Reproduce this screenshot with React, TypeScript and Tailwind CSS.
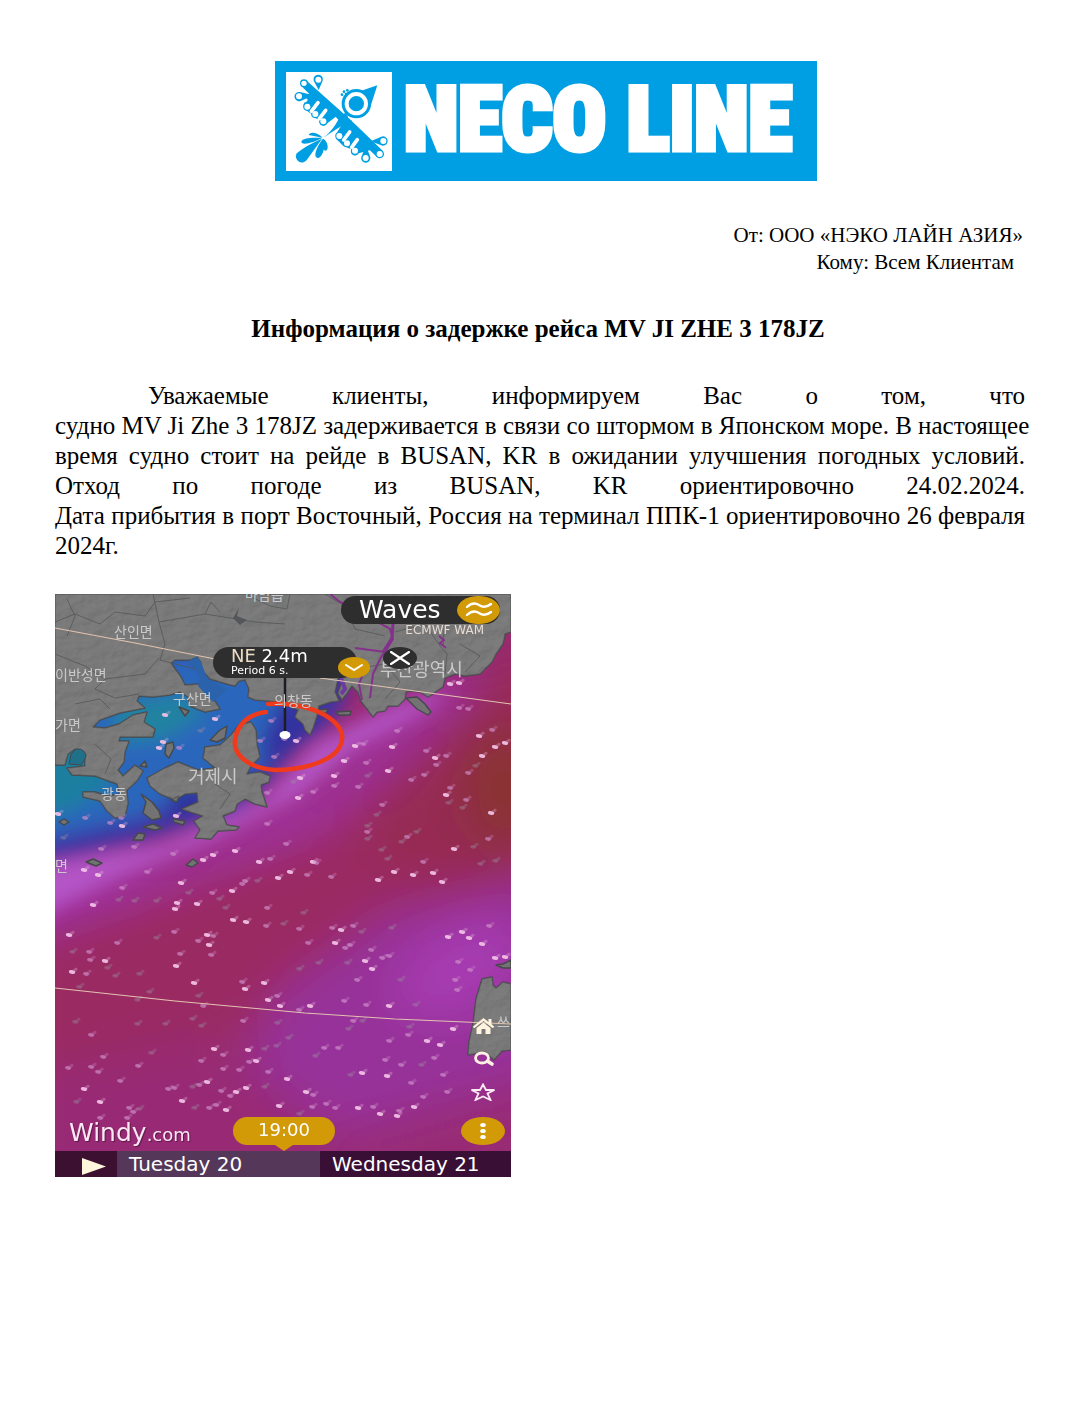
import React from "react";

type Pt = [number, number, number];

// x, y, brightness (1 = faint, 2 = medium, 3 = bright)
const PARTICLES: Pt[] = [
  [126, 289, 3], [187, 290, 2], [202, 287, 1], [177, 297, 3], [67, 294, 2], [157, 299, 2], [133, 299, 1], [164, 305, 1],
  [38, 311, 3], [63, 306, 1], [79, 307, 1], [101, 307, 1], [122, 309, 3], [120, 315, 3], [142, 310, 3], [170, 314, 1],
  [212, 314, 2], [248, 319, 1], [178, 326, 3], [191, 328, 3], [211, 332, 2], [228, 330, 1], [244, 335, 2], [277, 334, 2],
  [286, 336, 3], [298, 332, 2], [306, 338, 1], [14, 341, 3], [119, 338, 2], [152, 341, 3], [158, 342, 2], [101, 344, 1],
  [62, 349, 2], [143, 347, 2], [154, 351, 3], [253, 349, 2], [280, 349, 3], [295, 351, 2], [290, 354, 2], [316, 356, 2],
  [17, 358, 1], [34, 358, 2], [125, 360, 2], [156, 361, 2], [35, 366, 2], [50, 367, 3], [52, 374, 1], [121, 372, 3],
  [17, 378, 3], [31, 380, 2], [60, 382, 1], [84, 380, 1], [310, 367, 3], [292, 369, 1], [317, 375, 3], [327, 364, 2],
  [334, 362, 2], [263, 369, 1], [244, 375, 1], [336, 334, 1], [393, 343, 3], [407, 338, 3], [414, 344, 3], [427, 350, 3],
  [434, 332, 2], [440, 364, 3], [450, 363, 3], [403, 368, 2], [415, 376, 2], [400, 386, 2], [402, 396, 2], [139, 389, 3],
  [187, 388, 2], [190, 395, 3], [209, 389, 3], [302, 386, 2], [345, 386, 1], [213, 406, 3], [222, 402, 2], [225, 412, 3],
  [255, 412, 3], [289, 407, 2], [311, 411, 2], [334, 412, 3], [360, 411, 1], [244, 416, 2], [148, 412, 2], [143, 402, 1],
  [82, 406, 1], [24, 393, 1], [94, 398, 1], [298, 427, 2], [307, 427, 1], [293, 435, 1], [188, 427, 2], [137, 425, 1],
  [146, 432, 1], [82, 430, 1], [110, 430, 1], [20, 428, 1], [36, 441, 2], [222, 429, 1], [354, 433, 1], [398, 435, 3],
  [353, 441, 2], [334, 447, 2], [372, 447, 3], [385, 451, 3], [283, 454, 2], [269, 454, 2], [233, 444, 1], [221, 452, 1],
  [209, 455, 1], [159, 455, 3], [168, 461, 2], [193, 456, 3], [201, 467, 3], [194, 468, 2], [146, 467, 2], [96, 459, 1],
  [48, 463, 2], [260, 462, 1], [330, 466, 2], [346, 471, 2], [366, 471, 1], [379, 464, 2], [83, 472, 2], [13, 474, 2],
  [36, 473, 2], [43, 478, 2], [168, 475, 2], [184, 476, 2], [213, 478, 2], [307, 479, 3], [332, 482, 3], [388, 481, 2],
  [65, 487, 2], [232, 485, 3], [152, 488, 3], [144, 491, 2], [356, 489, 2], [295, 481, 1], [29, 495, 3], [113, 495, 2],
  [119, 494, 2], [137, 493, 1], [191, 494, 3], [209, 493, 1], [181, 498, 3], [175, 502, 2], [166, 497, 2], [251, 498, 3],
  [258, 501, 2], [392, 498, 2], [368, 503, 2], [21, 508, 1], [45, 508, 3], [127, 507, 3], [161, 511, 2], [154, 514, 2],
  [139, 514, 1], [171, 516, 3], [224, 512, 3], [257, 513, 2], [271, 510, 2], [280, 514, 2], [303, 514, 3], [318, 513, 2],
  [359, 513, 3], [325, 520, 3], [342, 522, 3], [344, 517, 2], [74, 514, 2], [78, 518, 2], [72, 524, 2], [45, 524, 2],
  [244, 520, 1], [84, 515, 1], [300, 152, 3], [308, 150, 2], [337, 153, 3], [371, 157, 2], [380, 164, 3], [391, 162, 2],
  [381, 171, 2], [424, 142, 3], [440, 153, 3], [450, 149, 3], [427, 162, 3], [420, 172, 1], [413, 179, 2], [311, 169, 2],
  [289, 167, 3], [279, 182, 3], [245, 184, 3], [279, 192, 2], [303, 193, 2], [312, 182, 1], [333, 177, 3], [356, 186, 2],
  [369, 181, 2], [258, 198, 2], [243, 204, 3], [238, 188, 1], [395, 194, 2], [391, 201, 3], [411, 206, 2], [393, 209, 1],
  [407, 214, 1], [327, 211, 2], [321, 221, 1], [436, 219, 3], [433, 245, 2], [399, 255, 3], [418, 253, 1], [312, 232, 1],
  [312, 238, 2], [312, 245, 1], [352, 243, 2], [361, 238, 1], [346, 248, 1], [326, 256, 1], [368, 268, 2], [332, 265, 1],
  [231, 250, 2], [258, 268, 3], [261, 269, 2], [235, 278, 3], [252, 281, 2], [276, 283, 2], [323, 286, 3], [339, 278, 3],
  [358, 281, 3], [378, 279, 3], [387, 288, 3], [425, 270, 1], [440, 267, 1], [404, 114, 2], [413, 115, 2], [437, 136, 2],
  [342, 137, 2], [395, 90, 3], [404, 89, 3], [212, 199, 2], [212, 230, 2], [229, 145, 2], [241, 147, 3], [216, 127, 2],
  [205, 147, 2], [219, 163, 2], [180, 257, 3], [158, 261, 3], [148, 266, 3], [118, 260, 2], [204, 268, 3], [215, 265, 2],
  [223, 284, 3], [190, 287, 2], [92, 278, 2], [79, 253, 2], [29, 276, 3], [43, 281, 3], [46, 255, 2], [55, 229, 2],
  [67, 232, 3], [66, 224, 2], [30, 224, 2], [3, 220, 3], [8, 244, 1], [110, 121, 3], [160, 125, 3], [145, 137, 1],
  [108, 148, 3], [104, 154, 3], [124, 154, 2], [121, 222, 3],
];

const FILL = ["", "#9b8aa0", "#cf8fcb", "#f0bfe4"];

const LAND =
  "M0 0H456V38L450 40L448 50L441 60L437 68L425 80L410 82L400 80L390 84L388 93L382 97L373 103L365 98L356 97L351 98L350 105L343 112L333 112L330 117L322 118L318 123L312 115L306 107L303 98L297 92L292 99L287 106L283 99L287 88L284 80L280 98L284 107L276 108L264 112L262 122L258 134L255 141L250 136L248 130L240 123L243 116L234 112L222 108L213 107L200 106L193 103L194 95L190 86L184 87L180 92L172 90L165 88L155 85L147 76L146 68L142 63L135 66L120 66L116 69L126 83L130 91L143 90L150 98L158 104L165 115L150 118L142 115L135 112L133 103L125 98L115 101L98 103L84 102L82 107L90 114L65 119L45 126L38 133L50 134L64 130L78 121L92 118L89 128L100 135L98 143L65 143L64 147L74 147L70 158L69 168L63 176L68 182L80 171L88 177L82 187L72 196L73 210L70 222L60 224L52 217L45 207L28 203L28 198L40 198L52 202L65 200L62 190L40 182L17 181L12 174L30 172L30 162L20 155L13 160L10 171H0Z";
const GEOJE =
  "M92 184L110 174L123 168L143 176L160 174L148 164L150 153L165 151L176 141L184 131L196 128L201 136L202 150L205 163L196 172L192 180L205 178L215 182L214 188L206 191L207 198L212 213L200 210L190 205L182 210L180 217L168 222L172 231L184 233L181 236L163 237L156 245L140 244L145 236L139 227L148 222L135 218L127 215L143 208L142 199L130 200L120 206L105 200L95 192Z";
const TSUSHIMA =
  "M427 385L437 383L438 391L441 394L448 388L456 390V456L447 457L439 466L430 458L413 461L414 448L418 430L421 405Z";
const ISLES = [
  "M86 200L97 208L104 217L106 224L97 226L88 219L91 208Z",
  "M111 150L118 148L119 154L114 164L110 160Z",
  "M155 146L165 136L172 132L170 144L162 148Z",
  "M124 113L134 117L130 122Z",
  "M116 206L124 202L122 208Z",
  "M118 225L130 227L128 231L119 228Z",
  "M88 233L98 230L107 234L100 236Z",
  "M78 246L83 239L90 240L88 246Z",
  "M31 268L38 265L47 269L41 272Z",
  "M131 271L138 265L143 269L137 273Z",
  "M4 228L9 225L14 228L9 231Z",
  "M85 172L90 167L92 173Z",
  "M351 104L362 103L370 110L376 118L373 121L362 115Z",
  "M262 116L273 115L271 119L262 119Z",
  "M281 118L296 117L295 121L284 121Z",
  "M441 371L448 370L456 366V374L448 374Z",
];
const ROADS =
  "M0 28L20 20L45 30L60 18L90 22L100 8L135 4M98 0L104 28L110 50L105 66L140 75M190 0L215 12L232 15L235 0M104 28L150 20L200 28L230 30M0 60L30 72L50 85L90 80L104 64M50 85L40 95L60 104L84 100M12 5L20 22L12 42M150 20L156 8L165 18M270 0L290 12L300 35L330 42M340 38L370 30L385 52L392 60L390 80M385 5L390 22L388 52M300 75L330 70L345 88L330 105M405 50L425 62L410 78M20 110L45 105L55 115M40 150L56 165L50 180M160 190L175 200L165 215";
const INLET = "M134 70L145 83L143 92L158 108L172 96L152 84L146 68L142 63L135 66Z";

function SeaMap() {
  return (
    <svg viewBox="0 0 456 583" preserveAspectRatio="none" className="col-start-1 row-start-1 block h-full w-full" aria-hidden="true">
      <defs>
        <filter id="soft" x="-50%" y="-50%" width="200%" height="200%"><feGaussianBlur stdDeviation="22" /></filter>
        <filter id="soft2" x="-50%" y="-50%" width="200%" height="200%"><feGaussianBlur stdDeviation="9" /></filter>
        <filter id="speck"><feGaussianBlur stdDeviation="0.7" /></filter>
        <filter id="relief" x="0" y="0" width="100%" height="100%">
          <feTurbulence type="fractalNoise" baseFrequency="0.07 0.1" numOctaves="3" seed="4" result="n" />
          <feDiffuseLighting in="n" surfaceScale="2" lightingColor="#949494" result="l"><feDistantLight azimuth="225" elevation="55" /></feDiffuseLighting>
          <feComposite in="l" in2="SourceAlpha" operator="in" />
        </filter>
      </defs>
      <rect width="456" height="583" fill="#972a70" />
      <g filter="url(#soft)">
        <path d="M-40 330L200 260L330 200L500 150V330L250 420L-40 540Z" fill="#9a2a62" />
        <path d="M220 400L330 320L500 280V480L300 540L170 520Z" fill="#97309a" />
        <ellipse cx="405" cy="375" rx="70" ry="42" fill="#a63bb0" transform="rotate(-30 405 375)" />
        <path d="M-40 480L160 440L300 560L500 500V620H-40Z" fill="#982a74" />
        <path d="M-40 350V280L120 260L260 190L330 120L400 80L430 90L360 150L260 240L100 300Z" fill="#a030a2" />
        <path d="M320 210L380 150L450 70L510 50V260L400 290L320 270Z" fill="#962a52" />
        <ellipse cx="450" cy="195" rx="42" ry="60" fill="#8a3030" />
      </g>
      <g filter="url(#soft2)">
        <path d="M-20 325V272L110 250L210 205L260 150L340 112L400 95L370 118L300 155L240 205L150 250L60 285Z" fill="#b455c6" />
        <path d="M-20 -20H300L290 108L272 132L240 157L212 190L180 218L90 246L-20 270Z" fill="#3c35a4" />
        <path d="M-20 60H190L235 112L215 170L140 195L90 222L-20 248Z" fill="#2a66bc" />
        <path d="M-20 150L30 140L60 190L20 215L-20 225Z" fill="#1f7fa0" />
        <path d="M60 110L130 100L150 120L110 145L60 150Z" fill="#2283a0" />
        <path d="M225 108L255 112L262 138L235 152L205 170L208 142Z" fill="#3030a0" />
        <path d="M120 195L145 193L140 212L115 218Z" fill="#252c94" />
      </g>
      <g fill="#727372" stroke="#46484a" strokeWidth="1.4" strokeLinejoin="round">
        <path d={LAND} /><path d={GEOJE} /><path d={TSUSHIMA} />
        {ISLES.map((d) => <path key={d} d={d} />)}
      </g>
      <g filter="url(#relief)" opacity="0.35">
        <path d={LAND} /><path d={GEOJE} /><path d={TSUSHIMA} />
      </g>
      <path d={INLET} fill="#2a62ac" />
      <path d={ROADS} fill="none" stroke="#525456" strokeWidth="1" opacity="0.75" strokeLinejoin="round" />
      <path d="M178 24L184 14L182 22L192 26L185 31Z" fill="#54565a" />
      <path d="M21 155A8 7 0 0 1 30 165L26 171L14 170L16 160Z" fill="#20708a" stroke="#46484a" />
      <g fill="none" stroke="#84308c" strokeWidth="3">
        <path d="M275 0L285 8L308 20L335 35L338 45L330 58L300 54M338 45L325 65L318 80L315 104M312 70L304 90L307 106" strokeWidth="2" />
        <path d="M338 30L337 44L328 58" />
        <path d="M384 42L389 46L385 49L391 54" strokeWidth="2" />
        <path d="M286 84L290 95L286 100" strokeWidth="4" stroke="#6c3aa0" />
      </g>
      <g filter="url(#speck)">
        {PARTICLES.map(([x, y, b], i) => (
          <g key={i} fill={FILL[b]}>
            <path d={`M${x - 2.5} ${y}L${x + 4} ${y - 4.5}L${x + 6} ${y - 3}L${x + 2.5} ${y + 1}Z`} opacity="0.3" />
            <ellipse cx={x} cy={y} rx={b === 3 ? 3.2 : 3} ry={b === 3 ? 1.9 : 1.7} transform={`rotate(15 ${x} ${y})`} opacity={b === 1 ? 0.3 : b === 2 ? 0.6 : 0.95} />
          </g>
        ))}
      </g>
      <g fill="none" stroke="#e3c3b0" strokeWidth="1.2">
        <path d="M0 34L80 49L160 65" /><path d="M265 84L360 97L456 110" /><path d="M0 394L120 407L250 419L340 425L456 430" />
      </g>
      <path d="M230 84V138" stroke="#1c1c24" strokeWidth="2.5" />
      <path d="M213 110C260 108 290 128 287 146C284 168 245 176 220 176C192 174 178 160 180 146C182 130 194 120 211 118" fill="none" stroke="#f03a1c" strokeWidth="4.5" strokeLinecap="round" />
      <ellipse cx="230" cy="141" rx="5.5" ry="4" fill="#fff" />
    </svg>
  );
}

function Bird() {
  return (
    <svg viewBox="0 0 318 297" className="h-[99px] w-[106px] shrink-0 bg-white" aria-hidden="true">
      <g fill="#009fe3">
        <path d="M46 42L62 26L174 126L184 134L290 236L272 254L180 166L150 136L120 116Z" />
        <path d="M112 198C134 180 152 156 164 128L198 146C166 160 136 180 112 198Z" />
        <path d="M226 56L274 40L252 108Z" />
        <circle cx="211" cy="95" r="44" />
        <path d="M178 122L186 132L182 140L164 132Z" />
        <circle cx="168" cy="68" r="4" /><circle cx="174" cy="59" r="4" /><circle cx="184" cy="55" r="4" /><circle cx="180" cy="66" r="4" />
        <path d="M97 8A14 14 0 0 1 110 26L98 54L84 28A14 14 0 0 1 97 8Z" />
        <path d="M42 60L82 70L46 86A14 14 0 1 1 42 60Z" />
        <path d="M254 208L286 194A14 14 0 1 1 290 221Z" />
        <path d="M240 222L252 252A14 14 0 1 1 226 254Z" />
        <circle cx="54" cy="34" r="12" /><circle cx="281" cy="246" r="13" />
        <path d="M52 99L76 52L160 126L124 154A12 12 0 0 1 101 144L78 134L76 126L54 110Z" />
        <path d="M149 188L172 150L262 232L218 244A12 12 0 0 1 196 232L172 222L150 200Z" />
        <circle cx="64" cy="104" r="12" /><circle cx="88" cy="126" r="12" /><circle cx="112" cy="148" r="12" />
        <circle cx="160" cy="192" r="12" /><circle cx="183" cy="214" r="12" /><circle cx="207" cy="236" r="12" />
        <path d="M110 197L68 189C72 178 94 180 110 197Z" />
        <path d="M108 198C86 196 46 196 46 210C48 222 88 210 108 198Z" />
        <path d="M108 200L64 262A16 16 0 1 1 32 244C50 228 80 212 108 200Z" />
        <path d="M110 201C122 222 108 258 96 258C78 256 94 222 110 201Z" />
        <path d="M111 200C126 206 130 234 118 236C108 234 108 214 111 200Z" />
      </g>
      <g stroke="#fff" strokeWidth="11" strokeLinecap="round">
        <path d="M76 118L96 92" /><path d="M100 140L119 115" /><path d="M58 88L62 84" strokeWidth="6" />
        <path d="M173 204L191 180" /><path d="M197 226L214 203" />
      </g>
      <g fill="#fff">
        <circle cx="54" cy="34" r="8" /><circle cx="97" cy="23" r="9" /><circle cx="39" cy="73" r="9" />
        <circle cx="292" cy="207" r="9" /><circle cx="239" cy="258" r="9" /><circle cx="281" cy="246" r="9" />
        <circle cx="64" cy="104" r="9" /><circle cx="88" cy="126" r="9" /><circle cx="112" cy="148" r="9" />
        <circle cx="160" cy="192" r="9" /><circle cx="183" cy="214" r="9" /><circle cx="207" cy="236" r="9" />
      </g>
      <circle cx="211" cy="95" r="29" fill="none" stroke="#fff" strokeWidth="12" />
    </svg>
  );
}

const PLACES = [
  { name: "마암읍", at: "top-[-8px] left-[190px]" },
  { name: "산인면", at: "top-[29px] left-[59px]" },
  { name: "이반성면", at: "top-[72px] left-0" },
  { name: "구산면", at: "top-[96px] left-[118px]" },
  { name: "가면", at: "top-[122px] left-0" },
  { name: "의창동", at: "top-[98px] left-[219px]" },
  { name: "광동", at: "top-[191px] left-[46px]" },
  { name: "면", at: "top-[263px] left-0" },
  { name: "쓰", at: "top-[419px] left-[442px]" },
  { name: "거제시", at: "top-[173px] left-[133px] text-[18px]" },
  { name: "부산광역시", at: "top-[66px] left-[325px] text-[18px]" },
];

const gold = "flex items-center justify-center rounded-[50%] bg-[#d39a08]";

export default function App() {
  return (
    <main className="min-h-screen bg-white pt-[61px] pr-[63px] pb-16 pl-[55px] font-['Liberation_Serif','Times_New_Roman',serif] text-black">
      <header>
        <div className="ml-[220px] flex h-[120px] w-[542px] items-center gap-3 bg-[#009fe3] px-[11px]">
          <Bird />
          <span className="pb-1 whitespace-nowrap font-['Roboto_Condensed','Liberation_Sans_Narrow',sans-serif] text-[89px] leading-none font-black text-white [-webkit-text-stroke:5px_white]">NECO LINE</span>
        </div>
        <div className="mt-[41px] text-right text-[21px] leading-[27px]">
          <p className="pr-0.5">От: ООО «НЭКО ЛАЙН АЗИЯ»</p>
          <p className="pr-[11px]">Кому: Всем Клиентам</p>
        </div>
      </header>
      <h1 className="mt-[38px] pr-1 text-center text-[25px] leading-[30px] font-bold">Информация о задержке рейса MV JI ZHE 3 178JZ</h1>
      <div className="mt-[37px] text-justify text-[25px] leading-[30px]">
        <p className="indent-[93px] [text-align-last:justify]">Уважаемые клиенты, информируем Вас о том, что</p>
        <p className="whitespace-nowrap [text-align-last:justify]">судно MV Ji Zhe 3 178JZ задерживается в связи со штормом в Японском море. В настоящее</p>
        <p className="[text-align-last:justify]">
          время судно стоит на рейде в BUSAN, KR в ожидании улучшения погодных условий. Отход по погоде из BUSAN, KR ориентировочно 24.02.2024.
        </p>
        <p>Дата прибытия в порт Восточный, Россия на терминал ППК-1 ориентировочно 26 февраля 2024г.</p>
      </div>

      <figure className="relative mt-[33px] grid h-[583px] w-[456px] overflow-hidden font-['DejaVu_Sans',sans-serif] text-white">
        <SeaMap />
        {PLACES.map((p) => (
          <span key={p.name + p.at} className={"absolute font-['Noto_Sans_CJK_KR',sans-serif] text-[14px] leading-4 whitespace-nowrap text-[#c9c9c9] " + p.at}>{p.name}</span>
        ))}

        <div className="absolute top-[53px] left-[158px] flex items-start">
          <div className="h-[31px] w-[144px] rounded-full bg-[#2e2e2e] pl-[18px] whitespace-nowrap">
            <p className="text-[18px] leading-[18px]"><span className="text-[#e8dcc4]">NE</span> 2.4m</p>
            <p className="text-[11px] leading-[12px]">Period 6 s.</p>
          </div>
          <button aria-label="Expand" className={gold + " mt-[10px] -ml-[19px] h-[21px] w-8"}>
            <svg viewBox="0 0 18 8" className="h-2 w-[18px]" fill="none" stroke="#fff" strokeWidth="2" strokeLinecap="round"><path d="M1 1L9 6L17 1" /></svg>
          </button>
          <button aria-label="Close" className="ml-[13px] flex h-[22px] w-[34px] items-center justify-center rounded-[50%] bg-[#2e2e2e]">
            <svg viewBox="0 0 20 14" className="h-3.5 w-5" stroke="#fff" strokeWidth="2.2" strokeLinecap="round"><path d="M1 1L19 13M19 1L1 13" /></svg>
          </button>
        </div>

        <div className="relative col-start-1 row-start-1 flex flex-col justify-between">
          <div className="flex flex-col items-end pt-0.5 pr-[11px]">
            <div className="flex h-7 w-[159px] items-center justify-between rounded-full bg-[#2e2e2e] pl-[18px] text-[25px] leading-7">
              Waves
              <button aria-label="Choose layer" className={gold + " h-7 w-[43px]"}>
                <svg viewBox="0 0 28 16" className="h-4 w-7" fill="none" stroke="#fff" strokeWidth="2.4" strokeLinecap="round"><path d="M2 5C7 0 11 1 14 3S21 6 26 2M2 13C7 8 11 9 14 11S21 14 26 10" /></svg>
              </button>
            </div>
            <span className="pr-4 text-[12px] leading-3 whitespace-nowrap text-[#e8dcd4]">ECMWF WAM</span>
          </div>

          <div>
            <div className="flex flex-col items-end gap-4 pr-[15px]">
              <button aria-label="Home">
                <svg viewBox="0 0 24 18" className="h-[18px] w-[25px]" fill="#fff3df"><path d="M12 1L1 10L3 11L12 4L21 11L23 10L20 7V2H17V5Z" /><path d="M12 5.500L5 11V17H10V12H14V17H19V11Z" /></svg>
              </button>
              <button aria-label="Search">
                <svg viewBox="0 0 24 16" className="h-4 w-6" fill="none" stroke="#fff0e4"><ellipse cx="10" cy="7" rx="6.500" ry="5" strokeWidth="2.800" /><path d="M16 10.500L20 13" strokeWidth="3.600" strokeLinecap="round" /></svg>
              </button>
              <button aria-label="Favourite">
                <svg viewBox="0 0 26 18" className="h-[18px] w-[26px]" fill="none" stroke="#fdeaf3" strokeWidth="1.800"><path d="M13 1.500L16 7H24.500L17.500 10.500L20.500 17L13 13.500L5.500 17L8.500 10.500L1.500 7H10Z" /></svg>
              </button>
            </div>
            <div className="mt-4 mb-1.5 flex h-7 items-center pr-1.5 pl-[14px]">
              <p className="w-[164px] pt-1.5 text-[25px] leading-7 whitespace-nowrap text-[#fde8f4] [text-shadow:1px_1px_1px_#5a1848]">Windy<span className="text-[18px]">.com</span></p>
              <div className="relative h-7 w-[102px] rounded-full bg-[#d39a08] text-center text-[18px] leading-[26px]">
                19:00
                <svg viewBox="0 0 24 8" className="absolute top-full left-1/2 -mt-0.5 h-2 w-6 -translate-x-1/2"><path d="M0 0H24L12 8Z" fill="#d39a08" /></svg>
              </div>
              <button aria-label="More" className={gold + " ml-auto h-7 w-11"}>
                <svg viewBox="0 0 8 18" className="h-[18px] w-2" fill="#fff"><ellipse cx="4" cy="3" rx="2.800" ry="2" /><ellipse cx="4" cy="9" rx="2.800" ry="2" /><ellipse cx="4" cy="15" rx="2.800" ry="2" /></svg>
              </button>
            </div>
            <div className="flex h-[26px] text-[20px] leading-[26px] whitespace-nowrap">
              <button aria-label="Play" className="flex w-[62px] items-center justify-center bg-[#3c1030] pt-1 pl-4">
                <svg viewBox="0 0 24 17" className="h-[17px] w-6"><path d="M0 0L24 8.500L0 17Z" fill="#fff6dc" /></svg>
              </button>
              <span className="w-[203px] bg-[#553859] pl-3">Tuesday 20</span>
              <span className="flex-1 bg-[#3a0f35] pl-3">Wednesday 21</span>
            </div>
          </div>
        </div>
      </figure>
    </main>
  );
}
